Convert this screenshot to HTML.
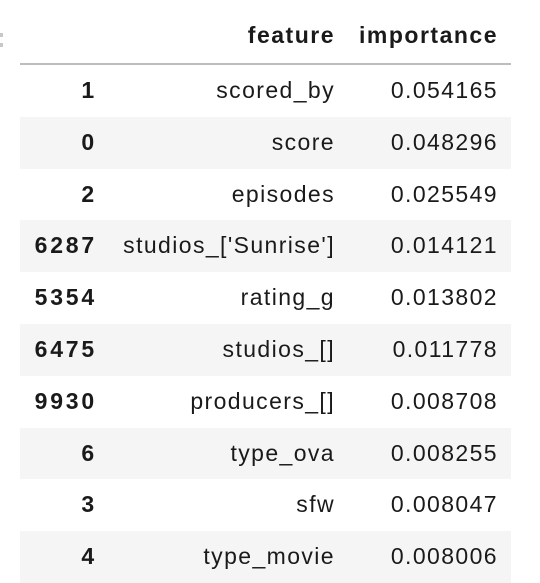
<!DOCTYPE html>
<html><head><style>
body{margin:0;width:540px;height:582px;background:#fff;overflow:hidden;position:relative;font-family:"Liberation Sans",Arial,sans-serif;color:#1a1a1a}
.r{position:absolute;left:20px;width:491px;height:51.8px}
.g{background:#f5f5f5}
.c{position:absolute;top:0;line-height:51.8px;font-size:23px;letter-spacing:1.4px;text-align:right;white-space:nowrap}
.i{right:414px;font-weight:bold;letter-spacing:2.8px}
.f{right:176px}
.v{right:13px}
.h .c{font-weight:bold;letter-spacing:1.5px}
.m{position:absolute;left:0;width:3px;height:4px;background:#c8c8c8}
</style></head><body>
<div class="m" style="top:33px"></div><div class="m" style="top:43px"></div>
<div class="r h" style="top:10px"><span class="c f">feature</span><span class="c v">importance</span></div>
<div style="position:absolute;left:20px;top:63px;width:491px;height:2px;background:#bdbdbd"></div>
<div class="r" style="top:65px"><span class="c i">1</span><span class="c f">scored_by</span><span class="c v">0.054165</span></div>
<div class="r g" style="top:116.8px"><span class="c i">0</span><span class="c f">score</span><span class="c v">0.048296</span></div>
<div class="r" style="top:168.6px"><span class="c i">2</span><span class="c f">episodes</span><span class="c v">0.025549</span></div>
<div class="r g" style="top:220.4px"><span class="c i">6287</span><span class="c f">studios_['Sunrise']</span><span class="c v">0.014121</span></div>
<div class="r" style="top:272.2px"><span class="c i">5354</span><span class="c f">rating_g</span><span class="c v">0.013802</span></div>
<div class="r g" style="top:324px"><span class="c i">6475</span><span class="c f">studios_[]</span><span class="c v">0.011778</span></div>
<div class="r" style="top:375.8px"><span class="c i">9930</span><span class="c f">producers_[]</span><span class="c v">0.008708</span></div>
<div class="r g" style="top:427.6px"><span class="c i">6</span><span class="c f">type_ova</span><span class="c v">0.008255</span></div>
<div class="r" style="top:479.4px"><span class="c i">3</span><span class="c f">sfw</span><span class="c v">0.008047</span></div>
<div class="r g" style="top:531.2px"><span class="c i">4</span><span class="c f">type_movie</span><span class="c v">0.008006</span></div>
</body></html>
